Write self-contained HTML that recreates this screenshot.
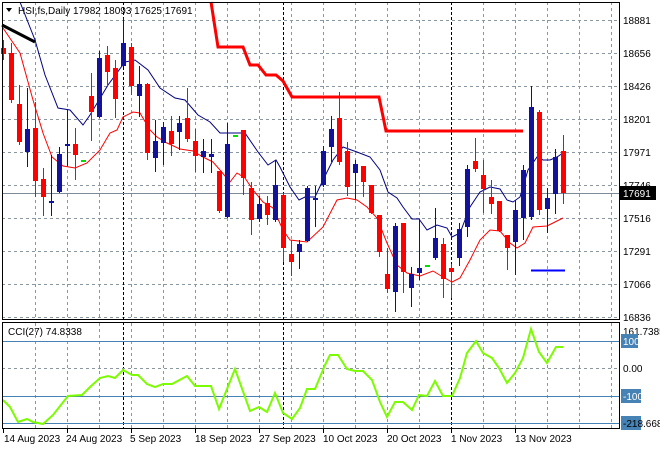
<!DOCTYPE html>
<html><head><meta charset="utf-8"><style>
html,body{margin:0;padding:0;background:#fff;width:660px;height:450px;overflow:hidden}
svg{display:block}
text{font-family:"Liberation Sans",sans-serif;font-size:10px}
</style></head><body>
<svg id="s" width="660" height="450" xmlns="http://www.w3.org/2000/svg">
<rect width="660" height="450" fill="#fff"/>
<g id="grid" stroke="#8c96a0" stroke-width="1" stroke-dasharray="3,3"></g>
<g id="vb" stroke="#000" stroke-width="1" stroke-dasharray="3,2">
<line x1="123.5" y1="2" x2="123.5" y2="428"/><line x1="283.5" y1="2" x2="283.5" y2="428"/><line x1="451.5" y1="2" x2="451.5" y2="428"/>
</g>
<line x1="2" y1="193.5" x2="620" y2="193.5" stroke="#7f8a96"/>
<g stroke="#4682b4"><line x1="2" y1="341.5" x2="620" y2="341.5"/><line x1="2" y1="396.5" x2="620" y2="396.5"/><line x1="2" y1="423.5" x2="620" y2="423.5"/></g>
<line x1="2" y1="368.5" x2="620" y2="368.5" stroke="#8c96a0" stroke-dasharray="3,3"/>
<polyline fill="none" stroke="#ff0000" stroke-width="3" points="211,2 218,47 243,47 250,65 258,65 266,75 276,75 283,81 292,97 379,97 386,131 523,131"/>
<polyline fill="none" stroke="#000" stroke-width="3" points="2,25 35,42"/>
<polyline fill="none" stroke="#000080" stroke-width="1" points="20,2 35,40 45,75 58,108 70,110 83,125 90,115 108,85 125,62 135,60 148,70 160,88 175,98 185,100 198,115 210,122 220,133 235,133 245,133 258,152 268,165 276,160 280,167 290,187 299,200 305,197 315,197 323,180 333,160 343,147 357,152 370,157 380,170 388,192 397,198 403,207 412,219 419,219 427,230 437,225 447,228 452,237 460,233 470,207 480,192 490,187 500,189 507,200 513,202 520,197 528,170 537,157 543,160 550,160 557,157 563,153"/>
<polyline fill="none" stroke="#ff0000" stroke-width="1" points="3,28 20,53 33,100 43,133 52,157 63,166 75,168 87,163 100,150 110,133 117,130 123,117 133,112 140,113 150,130 157,137 167,143 180,149 193,151 203,157 213,162 220,170 230,182 237,173 245,178 253,190 263,202 273,208 283,230 290,240 307,242 323,227 337,200 347,198 357,200 367,207 377,218 387,243 397,265 407,273 420,276 433,271 443,277 452,282 460,278 470,260 480,240 490,230 500,231 510,243 517,248 525,243 533,227 547,226 553,223 563,218"/>
<g id="cd"></g>
<line x1="531" y1="270.5" x2="565" y2="270.5" stroke="#0000ff" stroke-width="2"/>
<polyline fill="none" stroke="#7cfc00" stroke-width="2" points="3,400 10,407 18,422 27,419 33,422 43,424 53,415 68,396 82,395 90,387 100,378 108,376 115,378 123,370 132,375 138,375 147,384 155,387 163,384 172,384 187,376 195,386 211,386 219,409 235,369 250,411 259,407 267,412 275,393 283,413 292,419 300,408 307,389 315,389 325,365 330,355 338,355 347,369 355,371 363,371 372,380 380,402 387,417 395,402 403,402 412,410 419,395 427,396 435,381 443,396 452,396 460,378 467,353 476,341 483,353 492,358 499,368 507,383 515,373 523,358 531,329 539,352 547,363 556,347 563,347"/>
<g fill="none" stroke="#000" stroke-width="1">
<rect x="2.5" y="2.5" width="617" height="317"/>
<rect x="2.5" y="322.5" width="617" height="106"/>
</g>
<polygon points="6,8 12,8 9,12" fill="#000"/>
<text x="18" y="14" fill="#000">HSI,fs,Daily  17982 18093 17625 17691</text>
<text x="8" y="335" fill="#000">CCI(27) 74.8338</text>
<g fill="#000">
<text x="623" y="24">18881</text><text x="623" y="57">18656</text><text x="623" y="90">18426</text><text x="623" y="123">18201</text><text x="623" y="156">17971</text><text x="623" y="189">17746</text><text x="623" y="222">17516</text><text x="623" y="255">17291</text><text x="623" y="288">17066</text><text x="623" y="321">16836</text>
</g>
<rect x="620" y="186" width="36" height="14" fill="#000"/>
<text x="623" y="197" fill="#fff">17691</text>
<text x="623" y="335" fill="#000">161.7385</text>
<rect x="621" y="334" width="17" height="14" fill="#4682b4"/><text x="623" y="345" fill="#fff">100</text>
<text x="623" y="372" fill="#000">0.00</text>
<rect x="621" y="389" width="20" height="14" fill="#4682b4"/><text x="623" y="400" fill="#fff">-100</text>
<rect x="621" y="416" width="20" height="14" fill="#4682b4"/><text x="623" y="427" fill="#000">-218.668</text>
<g fill="#000">
<text x="4" y="442">14 Aug 2023</text><text x="66" y="442">24 Aug 2023</text><text x="130" y="442">5 Sep 2023</text><text x="195" y="442">18 Sep 2023</text><text x="259" y="442">27 Sep 2023</text><text x="323" y="442">10 Oct 2023</text><text x="387" y="442">20 Oct 2023</text><text x="451" y="442">1 Nov 2023</text><text x="515" y="442">13 Nov 2023</text>
</g>
<g stroke="#000"><line x1="3.5" y1="429" x2="3.5" y2="433"/><line x1="67.5" y1="429" x2="67.5" y2="433"/><line x1="131.5" y1="429" x2="131.5" y2="433"/><line x1="195.5" y1="429" x2="195.5" y2="433"/><line x1="259.5" y1="429" x2="259.5" y2="433"/><line x1="323.5" y1="429" x2="323.5" y2="433"/><line x1="387.5" y1="429" x2="387.5" y2="433"/><line x1="451.5" y1="429" x2="451.5" y2="433"/><line x1="515.5" y1="429" x2="515.5" y2="433"/></g>
</svg>
<script>
var NS="http://www.w3.org/2000/svg";
function el(p,t,a){var e=document.createElementNS(NS,t);for(var k in a)e.setAttribute(k,a[k]);p.appendChild(e);return e;}
var g=document.getElementById('grid');
for(var x=35;x<=611;x+=32){if(x==123||x==283||x==451)continue;el(g,'line',{x1:x+.5,y1:2,x2:x+.5,y2:320});el(g,'line',{x1:x+.5,y1:323,x2:x+.5,y2:428});}
[20,53,86,119,152,185,218,251,284,317].forEach(function(y){el(g,'line',{x1:2,y1:y+.5,x2:620,y2:y+.5});});
var R='#ff0000',B='#12129a',G='#00dd00';
var d=[[3,48,54,40,60,R],[11,53,100,43,103,R],[19,104,142,85,145,R],[27,129,152,88,167,B],[35,128,181,102,197,R],[43,179,197,168,216,R],[51,201,203,155,216,B],[59,154,192,147,193,B],[67,144,146,110,166,B],[75,144,155,128,180,R],[83,160,161,160,161,G],[91,96,112,73,141,R],[99,58,117,51,118,B],[107,55,72,46,87,R],[115,68,99,60,118,R],[123,43,66,18,67,B],[131,47,86,43,95,R],[139,84,96,66,117,B],[147,84,153,83,160,R],[155,141,158,120,172,B],[163,127,143,122,165,B],[171,131,144,116,156,R],[179,123,132,116,150,B],[187,118,139,88,142,R],[195,141,156,129,172,R],[203,151,157,139,173,B],[211,154,157,139,173,B],[219,171,211,171,213,R],[227,144,217,123,218,B],[235,135,136,135,136,G],[243,130,178,130,195,R],[251,188,220,182,235,R],[259,204,219,196,222,B],[267,203,215,196,225,R],[275,185,220,160,222,B],[283,195,248,193,262,R],[291,254,262,240,276,R],[299,244,252,240,269,B],[307,188,241,186,242,B],[315,198,200,186,227,B],[323,151,185,146,187,B],[331,129,147,116,162,B],[339,118,162,92,165,R],[347,151,187,142,196,R],[355,164,173,160,200,B],[363,166,182,166,197,R],[371,185,213,185,214,R],[379,215,252,215,257,R],[387,274,289,248,293,R],[395,226,292,223,312,B],[403,223,272,223,293,R],[411,274,288,267,307,B],[419,268,273,220,280,B],[427,265,266,265,266,G],[435,238,258,208,260,B],[443,244,279,238,298,R],[451,268,272,264,298,R],[459,229,258,223,266,B],[467,169,227,165,237,B],[475,161,169,138,172,R],[483,175,189,160,213,R],[491,197,204,180,214,R],[499,201,231,201,232,R],[507,235,248,235,270,R],[515,210,242,200,275,B],[523,170,218,165,240,B],[531,107,217,86,220,B],[539,112,210,110,215,R],[547,198,209,188,233,B],[555,157,194,149,214,B],[563,151,193,135,204,R]];
var c=document.getElementById('cd');
d.forEach(function(a){var x=a[0],col=a[5];
if(col!==G)el(c,'line',{x1:x+.5,y1:a[3],x2:x+.5,y2:a[4],stroke:(col===B?'#0000ff':col),'stroke-width':1});
var h=Math.max(2,a[2]-a[1]);el(c,'rect',{x:x-2,y:a[1],width:5,height:h,fill:col});});
</script>
</body></html>
